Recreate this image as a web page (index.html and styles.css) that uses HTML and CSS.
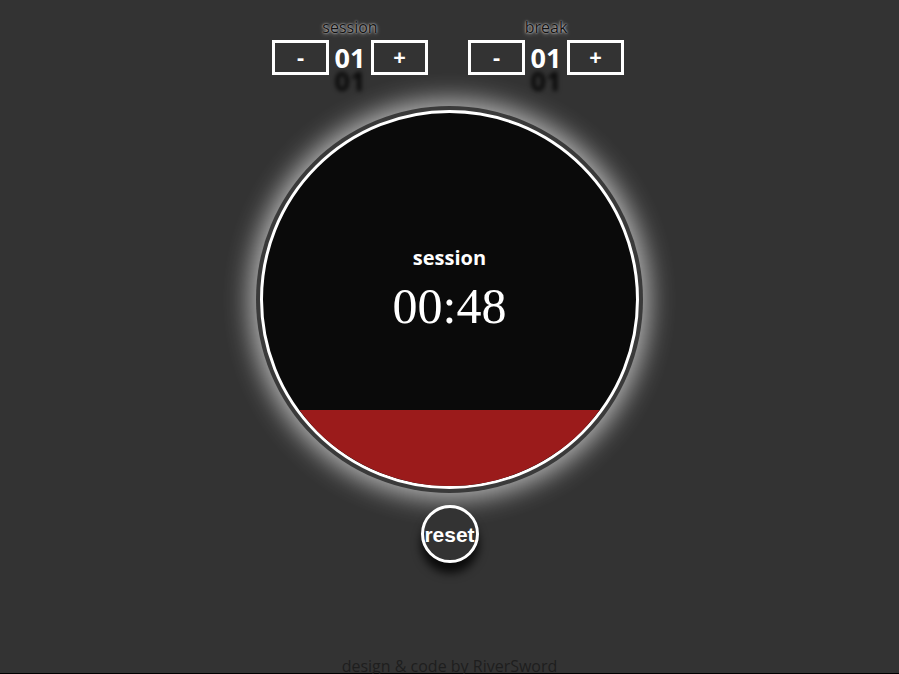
FILE: index.html
```html
<!DOCTYPE html>
<html lang="en">
<head>
<meta charset="utf-8">
<title>Pomodoro Clock</title>
<link rel="stylesheet" href="styles.css">
</head>
<body>
<main class="app">
  <div class="controls">
    <div class="group">
      <div class="label">session</div>
      <div class="stepper">
        <button class="btn">-</button>
        <span class="num">01</span>
        <button class="btn">+</button>
      </div>
    </div>
    <div class="group">
      <div class="label">break</div>
      <div class="stepper">
        <button class="btn">-</button>
        <span class="num">01</span>
        <button class="btn">+</button>
      </div>
    </div>
  </div>
  <div class="clock">
    <div class="face">
      <div class="fill" style="height:76px"></div>
      <div class="readout">
        <div class="mode">session</div>
        <div class="time">00:48</div>
      </div>
    </div>
  </div>
  <button class="reset">reset</button>
  <footer class="credit">design &amp; code by RiverSword</footer>
</main>
</body>
</html>
```
FILE: styles.css
```css
html, body {
  margin: 0;
  height: 100%;
  overflow: hidden;
  background: #333333;
}
.app {
  display: flex;
  flex-direction: column;
  align-items: center;
  height: 674px;
  box-sizing: border-box;
  border-bottom: 1px solid #000;
}
.controls {
  display: flex;
  gap: 40px;
  padding-top: 17px;
  margin-left: -3px;
}
.group {
  display: flex;
  flex-direction: column;
  align-items: center;
}
.label {
  font: 16px/20px "Open Sans", sans-serif;
  height: 23px;
  color: #111;
  text-shadow: 0 0 2px rgba(255, 255, 255, 0.9), 0 1px 4px rgba(255, 255, 255, 0.5);
}
.stepper {
  display: flex;
  align-items: center;
}
.btn {
  width: 57px;
  height: 35px;
  box-sizing: border-box;
  border: 3px solid #fff;
  background: transparent;
  color: #fff;
  font: bold 22px/1 "Open Sans", sans-serif;
  padding: 0 0 3px;
}
.num {
  width: 42px;
  text-align: center;
  font: bold 27px/35px "Open Sans", sans-serif;
  color: #fff;
  text-shadow: 0 23px 4px rgba(0, 0, 0, 0.85);
}
.clock {
  margin-top: 31px;
  width: 387px;
  height: 387px;
  flex-shrink: 0;
  box-sizing: border-box;
  padding: 4px;
  border-radius: 50%;
  background: #3a3a3a;
  box-shadow: 0 0 26px 6px rgba(255, 255, 255, 0.65);
}
.face {
  position: relative;
  height: 100%;
  box-sizing: border-box;
  border: 3px solid #fff;
  border-radius: 50%;
  background: #0a0a0a;
  overflow: hidden;
}
.fill {
  position: absolute;
  left: 0;
  right: 0;
  bottom: 0;
  background: #9b1b1b;
}
.readout {
  position: relative;
  display: flex;
  flex-direction: column;
  align-items: center;
  padding-top: 133px;
}
.mode {
  font: bold 20px/24px "Open Sans", sans-serif;
  color: #fff;
}
.time {
  margin-top: 8px;
  font: 50px/56px "Liberation Serif", serif;
  color: #fff;
}
.reset {
  margin-top: 12px;
  width: 58px;
  height: 58px;
  flex-shrink: 0;
  box-sizing: border-box;
  border-radius: 50%;
  border: 3px solid #fff;
  background: #333;
  color: #fff;
  font: bold 21px/1 "Liberation Sans", sans-serif;
  padding: 0;
  box-shadow: 0 10px 10px rgba(0, 0, 0, 0.8);
  display: flex;
  align-items: center;
  justify-content: center;
}
.credit {
  margin-top: 92px;
  flex-shrink: 0;
  font: 16px/22px "Open Sans", sans-serif;
  color: #1e1e1e;
}
```
